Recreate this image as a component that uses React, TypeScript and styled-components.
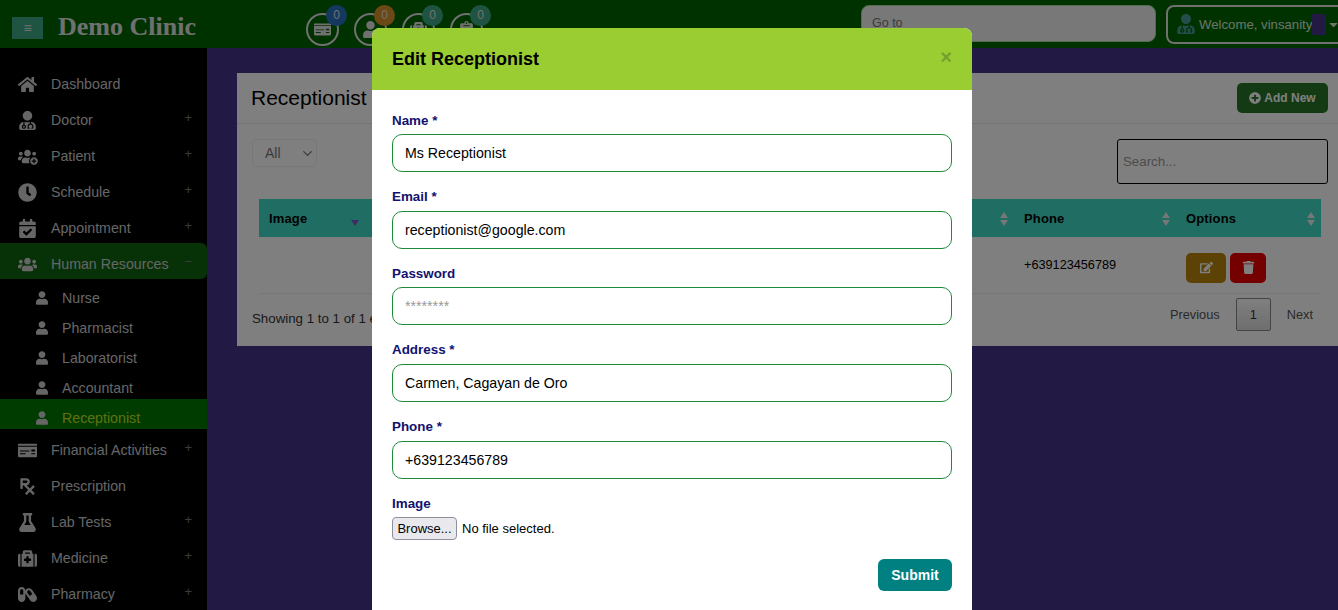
import React from "react";
import styled, { createGlobalStyle } from "styled-components";
import { ChevronDown } from "lucide-react";
import {
  FaCalendarCheck,
  FaCapsules,
  FaCaretDown,
  FaClock,
  FaEdit,
  FaFlask,
  FaHome,
  FaMedkit,
  FaMoneyCheck,
  FaNotesMedical,
  FaPlusCircle,
  FaPrescription,
  FaTrash,
  FaUser,
  FaUserMd,
  FaUsers,
} from "react-icons/fa";

const GlobalStyle = createGlobalStyle`
  html, body {
    margin: 0;
    height: 100%;
    overflow: hidden;
    font-family: "Liberation Sans", Arial, sans-serif;
    font-size: 14px;
  }
  * {
    box-sizing: border-box;
  }
`;

const Page = styled.div`
  display: grid;
  grid-template-rows: 48px 1fr;
  height: 610px;
  width: 1338px;
  overflow: hidden;
  background-color: #44358a;
`;

const Header = styled.header`
  display: flex;
  align-items: center;
  background-color: #006400;
  padding-left: 12px;
  overflow: hidden;
`;

const MenuButton = styled.button`
  display: flex;
  flex-shrink: 0;
  align-items: center;
  justify-content: center;
  width: 31px;
  height: 22px;
  margin-top: 8px;
  padding: 0;
  border: none;
  background-color: #3fa886;
  color: #e0e0e0;
  font-size: 14px;
`;

const Brand = styled.div`
  flex-shrink: 0;
  margin: 5px 0 0 15px;
  width: 248px;
  font-family: "Liberation Serif", serif;
  font-size: 26px;
  font-weight: bold;
  color: #e0e0e0;
`;

const Shortcuts = styled.div`
  display: flex;
  flex-shrink: 0;
  gap: 15px;
  width: 555px;
  padding-top: 10px;
`;

const Shortcut = styled.div`
  position: relative;
  display: flex;
  align-items: center;
  justify-content: center;
  width: 33px;
  height: 33px;
  border: 2px solid #e0e0e0;
  border-radius: 50%;
  color: #e0e0e0;
  font-size: 17px;
`;

const Badge = styled.span<{ $color: string }>`
  position: absolute;
  top: -10px;
  right: -10px;
  width: 21px;
  height: 21px;
  border-radius: 50%;
  background-color: ${(p) => p.$color};
  color: #e0e0e0;
  font-size: 12px;
  line-height: 21px;
  text-align: center;
`;

const GoTo = styled.input`
  flex-shrink: 0;
  width: 295px;
  height: 37px;
  margin-top: -1px;
  padding: 0 10px 2px;
  border: 1px solid #9fdf9f;
  border-radius: 8px;
  background-color: #f0f0f0;
  font-family: inherit;
  font-size: 12.5px;
  &::placeholder {
    color: #777;
  }
`;

const UserMenu = styled.div`
  display: flex;
  flex-shrink: 0;
  align-items: center;
  width: 185px;
  height: 39px;
  margin-left: 10px;
  padding-left: 8px;
  border: 2px solid #e0e0e0;
  border-radius: 8px;
  color: #d8e8d8;
  font-size: 13.2px;
  white-space: nowrap;
`;

const UserIcon = styled.span`
  display: flex;
  margin-right: 3px;
  font-size: 20px;
  color: #4a9a9a;
`;

const NameMask = styled.span`
  flex-shrink: 0;
  width: 14px;
  height: 21px;
  background-color: #44358a;
`;

const Caret = styled.span`
  display: flex;
  margin-left: 1px;
  font-size: 13px;
`;

const Body = styled.div`
  display: grid;
  grid-template-columns: 207px 1fr;
  min-height: 0;
`;

const Sidebar = styled.nav`
  padding-top: 15px;
  background-color: #000;
  overflow: hidden;
`;

const SideRow = styled.div<{ $open?: boolean }>`
  display: flex;
  align-items: center;
  height: 36px;
  padding: 6px 15px 0 16px;
  color: #ccc;
  font-size: 14.2px;
  background-color: ${(p) => (p.$open ? "#0f640f" : "transparent")};
  border-radius: ${(p) => (p.$open ? "0 6px 6px 0" : "0")};
`;

const SideIcon = styled.span`
  position: relative;
  display: flex;
  justify-content: center;
  width: 22px;
  margin-right: 13px;
  font-size: 19px;
`;

const PlusBadge = styled.span`
  position: absolute;
  right: -1px;
  bottom: 0;
  display: flex;
  padding: 1px;
  border-radius: 50%;
  background-color: #000;
  font-size: 8px;
`;

const SideLabel = styled.span`
  flex: 1;
`;

const Toggle = styled.span`
  margin-top: -6px;
  color: #777;
  font-size: 13px;
`;

const SubRow = styled.div<{ $active?: boolean }>`
  display: flex;
  align-items: center;
  height: 30px;
  padding: 8px 0 0 36px;
  font-size: 14.2px;
  color: ${(p) => (p.$active ? "#c0e020" : "#ccc")};
  background-color: ${(p) => (p.$active ? "#007800" : "transparent")};
`;

const SubIcon = styled.span`
  display: flex;
  justify-content: center;
  width: 12px;
  margin-right: 14px;
  font-size: 14px;
  color: #ccc;
`;

const Content = styled.main`
  padding: 25px 10px 0 30px;
  overflow: hidden;
`;

const Card = styled.section`
  width: 1101px;
  height: 273px;
  background-color: #fff;
`;

const CardHead = styled.div`
  display: flex;
  align-items: center;
  justify-content: space-between;
  height: 51px;
  padding: 0 10px 1px 14px;
  border-bottom: 1px solid #e8e8e8;
`;

const CardTitle = styled.h2`
  margin: 0;
  font-size: 21px;
  font-weight: normal;
  color: #000;
`;

const AddButton = styled.button`
  display: flex;
  align-items: center;
  gap: 3px;
  width: 91px;
  height: 30px;
  justify-content: center;
  border: none;
  border-radius: 5px;
  background-color: #267526;
  color: #fff;
  font-family: inherit;
  font-size: 12px;
  font-weight: bold;
`;

const CardBody = styled.div`
  padding: 15px 10px 0 15px;
`;

const Filters = styled.div`
  display: flex;
  align-items: flex-start;
  justify-content: space-between;
  height: 60px;
`;

const LengthWrap = styled.div`
  position: relative;
  display: flex;
  color: #777;
  svg {
    position: absolute;
    top: 7px;
    right: 2px;
    pointer-events: none;
  }
`;

const LengthSelect = styled.select`
  width: 65px;
  height: 28px;
  padding-left: 12px;
  appearance: none;
  border: 1px solid #eee;
  border-radius: 4px;
  background-color: #fff;
  color: #777;
  font-family: inherit;
  font-size: 14px;
`;

const SearchBox = styled.input`
  width: 211px;
  height: 45px;
  padding: 0 5px;
  border: 1px solid #000;
  border-radius: 3px;
  font-family: inherit;
  font-size: 13.3px;
  &::placeholder {
    color: #999;
  }
`;

const Table = styled.table`
  width: 1062px;
  margin-left: 7px;
  border-collapse: collapse;
  table-layout: fixed;
`;

const HeadCell = styled.th<{ $width: number }>`
  position: relative;
  width: ${(p) => p.$width}px;
  height: 38px;
  padding: 0 10px;
  background-color: #40dcc6;
  color: #000;
  font-size: 13px;
  font-weight: bold;
  letter-spacing: 0.15px;
  text-align: left;
`;

const SortMark = styled.span<{ $active?: boolean }>`
  position: absolute;
  top: 13px;
  right: 6px;
  display: flex;
  flex-direction: column;
  gap: 2px;
  &::before,
  &::after {
    content: "";
    width: 0;
    height: 0;
    border-left: 4px solid transparent;
    border-right: 4px solid transparent;
  }
  &::before {
    border-bottom: 6px solid ${(p) => (p.$active ? "transparent" : "#eee")};
  }
  &::after {
    border-top: 6px solid ${(p) => (p.$active ? "#7a5ac8" : "#eee")};
  }
`;

const Cell = styled.td`
  height: 56px;
  padding: 0 10px;
  border-bottom: 1px solid #eee;
  color: #000;
  font-size: 12.7px;
`;

const Actions = styled.div`
  display: flex;
  gap: 4px;
  margin-top: 6px;
`;

const ActionButton = styled.button<{ $color: string; $width: number }>`
  display: flex;
  align-items: center;
  justify-content: center;
  width: ${(p) => p.$width}px;
  height: 30px;
  border: none;
  border-radius: 5px;
  background-color: ${(p) => p.$color};
  color: #fff;
  font-size: 13px;
`;

const TableFooter = styled.div`
  display: flex;
  align-items: center;
  justify-content: space-between;
  padding: 4px 7px 0 0;
  color: #333;
`;

const Info = styled.span`
  padding-top: 9px;
  font-size: 13.3px;
`;

const Pager = styled.div`
  display: flex;
  align-items: center;
  gap: 16px;
  color: #555;
  font-size: 12.8px;
  padding-right: 8px;
`;

const PageNumber = styled.span`
  display: flex;
  align-items: center;
  justify-content: center;
  width: 35px;
  height: 33px;
  border: 1px solid #888;
  border-radius: 2px;
  background: linear-gradient(#fff, #ddd);
  color: #333;
`;

const Backdrop = styled.div`
  position: fixed;
  inset: 0;
  z-index: 10;
  display: flex;
  justify-content: center;
  padding: 28px 0 0 6px;
  background-color: rgba(0, 0, 0, 0.5);
  overflow: hidden;
`;

const Modal = styled.div`
  flex-shrink: 0;
  width: 600px;
  height: 640px;
  background-color: #fff;
  border-radius: 8px 8px 0 0;
`;

const ModalHead = styled.div`
  display: flex;
  align-items: center;
  justify-content: space-between;
  height: 62px;
  padding: 0 20px;
  background-color: #9acd32;
  border-radius: 8px 8px 0 0;
`;

const ModalTitle = styled.h3`
  margin: 0;
  font-size: 18px;
  font-weight: bold;
  color: #000;
`;

const Close = styled.span`
  margin-top: -4px;
  color: #74a02e;
  font-size: 20px;
  font-weight: bold;
`;

const Form = styled.form`
  padding: 21px 20px 0;
`;

const Field = styled.div`
  margin-bottom: 15.67px;
`;

const Label = styled.label`
  display: block;
  height: 23px;
  padding-top: 1.5px;
  color: #12126e;
  font-size: 13.4px;
  font-weight: bold;
`;

const Input = styled.input`
  display: block;
  width: 100%;
  height: 38px;
  padding: 0 12px;
  border: 1px solid #1e8a3c;
  border-radius: 10px;
  background-color: #fff;
  color: #000;
  font-family: inherit;
  font-size: 14.2px;
  &::placeholder {
    color: #999;
  }
`;

const FileRow = styled.div`
  display: flex;
  align-items: center;
  gap: 5px;
  font-size: 13px;
  color: #000;
`;

const BrowseButton = styled.button`
  width: 65px;
  height: 23px;
  padding: 0;
  border: 1px solid #8f8f9d;
  border-radius: 4px;
  background-color: #e9e9ed;
  color: #000;
  font-family: inherit;
  font-size: 13px;
`;

const FormFooter = styled.div`
  display: flex;
  justify-content: flex-end;
  margin-top: 19px;
`;

const Submit = styled.button`
  width: 74px;
  height: 32px;
  border: none;
  border-radius: 6px;
  background-color: #008080;
  color: #fff;
  font-family: inherit;
  font-size: 14px;
  font-weight: bold;
`;

const PatientIcon = () => (
  <>
    <FaUsers />
    <PlusBadge>
      <FaPlusCircle />
    </PlusBadge>
  </>
);

const menu = [
  { label: "Dashboard", icon: <FaHome /> },
  { label: "Doctor", icon: <FaUserMd />, more: true },
  { label: "Patient", icon: <PatientIcon />, more: true },
  { label: "Schedule", icon: <FaClock />, more: true },
  { label: "Appointment", icon: <FaCalendarCheck />, more: true },
];

const menuAfter = [
  { label: "Financial Activities", icon: <FaMoneyCheck />, more: true },
  { label: "Prescription", icon: <FaPrescription /> },
  { label: "Lab Tests", icon: <FaFlask />, more: true },
  { label: "Medicine", icon: <FaMedkit />, more: true },
  { label: "Pharmacy", icon: <FaCapsules />, more: true },
];

const staff = ["Nurse", "Pharmacist", "Laboratorist", "Accountant", "Receptionist"];

const shortcuts = [
  { icon: <FaMoneyCheck />, color: "#2a70c0" },
  { icon: <FaUser />, color: "#d89028" },
  { icon: <FaMedkit />, color: "#3fa886" },
  { icon: <FaNotesMedical />, color: "#3fa886" },
];

// the three middle titles sit behind the modal in the screenshot
const columns = [
  { title: "Image", width: 106 },
  { title: "", width: 200 },
  { title: "", width: 250 },
  { title: "", width: 199 },
  { title: "Phone", width: 162 },
  { title: "Options", width: 145 },
];

const fields = [
  { label: "Name *", type: "text", value: "Ms Receptionist" },
  { label: "Email *", type: "email", value: "receptionist@google.com" },
  { label: "Password", type: "password", placeholder: "********" },
  { label: "Address *", type: "text", value: "Carmen, Cagayan de Oro" },
  { label: "Phone *", type: "text", value: "+639123456789" },
];

const renderRow = (item: { label: string; icon: React.ReactNode; more?: boolean }) => (
  <SideRow key={item.label}>
    <SideIcon>{item.icon}</SideIcon>
    <SideLabel>{item.label}</SideLabel>
    {item.more && <Toggle>+</Toggle>}
  </SideRow>
);

const App: React.FC = () => {
  return (
    <Page>
      <GlobalStyle />
      <Header>
        <MenuButton aria-label="Menu">≡</MenuButton>
        <Brand>Demo Clinic</Brand>
        <Shortcuts>
          {shortcuts.map((s, i) => (
            <Shortcut key={i}>
              {s.icon}
              <Badge $color={s.color}>0</Badge>
            </Shortcut>
          ))}
        </Shortcuts>
        <GoTo placeholder="Go to" />
        <UserMenu>
          <UserIcon>
            <FaUserMd />
          </UserIcon>
          Welcome, vinsanity
          <NameMask />
          <Caret>
            <FaCaretDown />
          </Caret>
        </UserMenu>
      </Header>
      <Body>
        <Sidebar>
          {menu.map(renderRow)}
          <SideRow $open>
            <SideIcon>
              <FaUsers />
            </SideIcon>
            <SideLabel>Human Resources</SideLabel>
            <Toggle>−</Toggle>
          </SideRow>
          {staff.map((name) => (
            <SubRow key={name} $active={name === "Receptionist"}>
              <SubIcon>
                <FaUser />
              </SubIcon>
              {name}
            </SubRow>
          ))}
          {menuAfter.map(renderRow)}
        </Sidebar>
        <Content>
          <Card>
            <CardHead>
              <CardTitle>Receptionist</CardTitle>
              <AddButton>
                <FaPlusCircle /> Add New
              </AddButton>
            </CardHead>
            <CardBody>
              <Filters>
                <LengthWrap>
                  <LengthSelect defaultValue="All">
                    <option>All</option>
                  </LengthSelect>
                  <ChevronDown size={15} />
                </LengthWrap>
                <SearchBox placeholder="Search..." />
              </Filters>
              <Table>
                <thead>
                  <tr>
                    {columns.map((c, i) => (
                      <HeadCell key={i} $width={c.width}>
                        {c.title}
                        <SortMark $active={i === 0} />
                      </HeadCell>
                    ))}
                  </tr>
                </thead>
                <tbody>
                  <tr>
                    <Cell />
                    <Cell />
                    <Cell />
                    <Cell />
                    <Cell>+639123456789</Cell>
                    <Cell>
                      <Actions>
                        <ActionButton $color="#b8860b" $width={40}>
                          <FaEdit />
                        </ActionButton>
                        <ActionButton $color="#ea0000" $width={36}>
                          <FaTrash />
                        </ActionButton>
                      </Actions>
                    </Cell>
                  </tr>
                </tbody>
              </Table>
              <TableFooter>
                <Info>Showing 1 to 1 of 1 entries</Info>
                <Pager>
                  Previous
                  <PageNumber>1</PageNumber>
                  Next
                </Pager>
              </TableFooter>
            </CardBody>
          </Card>
        </Content>
      </Body>
      <Backdrop>
        <Modal>
          <ModalHead>
            <ModalTitle>Edit Receptionist</ModalTitle>
            <Close>×</Close>
          </ModalHead>
          <Form>
            {fields.map((f) => (
              <Field key={f.label}>
                <Label>{f.label}</Label>
                <Input type={f.type} defaultValue={f.value} placeholder={f.placeholder} />
              </Field>
            ))}
            <Label>Image</Label>
            <FileRow>
              <BrowseButton type="button">Browse...</BrowseButton>
              No file selected.
            </FileRow>
            <FormFooter>
              <Submit type="button">Submit</Submit>
            </FormFooter>
          </Form>
        </Modal>
      </Backdrop>
    </Page>
  );
};

export default App;
